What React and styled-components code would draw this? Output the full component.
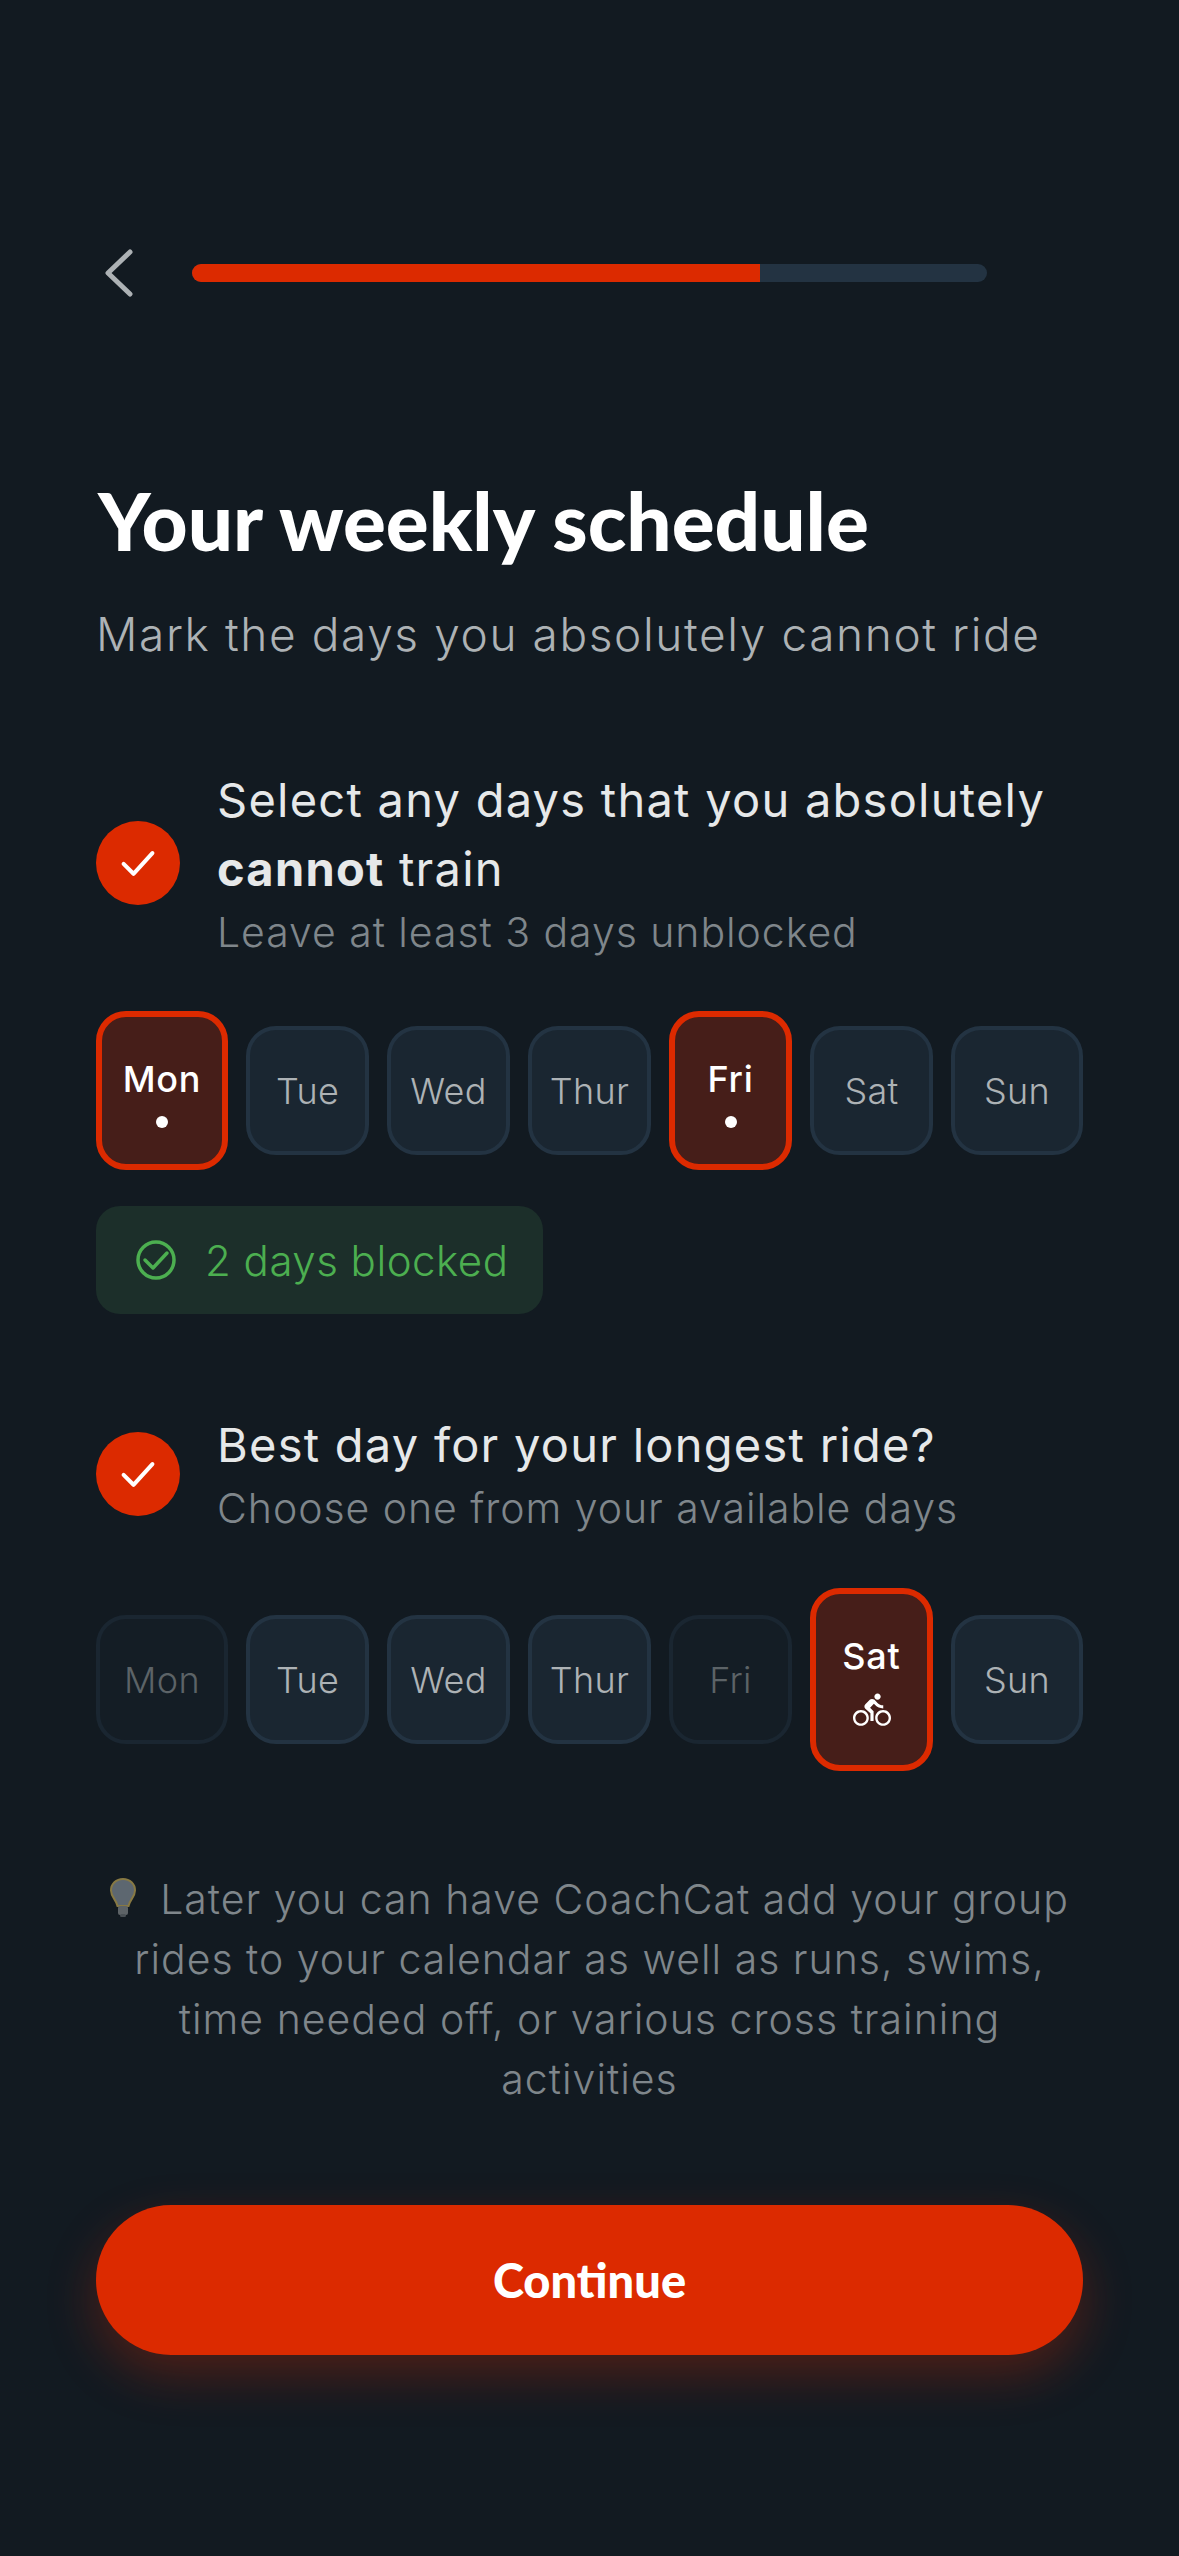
import React from "react";
import styled, { createGlobalStyle } from "styled-components";
import { MdDirectionsBike } from "react-icons/md";

const Global = createGlobalStyle`
  html, body { margin: 0; padding: 0; background: #121a21; }
  * { box-sizing: border-box; }
`;

const BODY = `"Inter", "Noto Sans", sans-serif`;
const HEAD = `"Lato", "Inter", sans-serif`;

const Page = styled.main`
  width: 1179px;
  height: 2556px;
  overflow: hidden;
  background: #121a21;
  padding: 250px 96px 0;
  font-family: ${BODY};
`;
const TopBar = styled.header`
  display: flex;
  align-items: center;
  height: 46px;
  padding-left: 9px;
  gap: 59px;
`;
const Back = styled.svg`
  width: 28px;
  height: 48px;
  flex: none;
  fill: none;
  stroke: #adb2b5;
  stroke-width: 5;
  stroke-linecap: round;
  stroke-linejoin: round;
`;
const Track = styled.div`
  width: 795px;
  height: 18px;
  border-radius: 9px;
  background: #233342;
  overflow: hidden;
`;
const Fill = styled.div`
  width: 568px;
  height: 100%;
  background: #dc2a00;
`;
const Title = styled.h1`
  margin: 179px 0 0 2px;
  font-family: ${HEAD};
  font-weight: 900;
  font-size: 80px;
  line-height: 90px;
  color: #fff;
`;
const Subtitle = styled.p`
  margin: 39px 0 0;
  font-size: 46px;
  line-height: 60px;
  font-weight: 300;
  letter-spacing: 1.6px;
  color: #adb2b5;
`;
const Step = styled.section`
  display: flex;
  align-items: center;
  gap: 37px;
  margin-top: ${(p) => p.$top}px;
`;
const Tick = styled.div`
  width: 84px;
  height: 84px;
  flex: none;
  border-radius: 50%;
  background: #dc2a00;
  display: flex;
  align-items: center;
  justify-content: center;
`;
const StepText = styled.div`
  display: flex;
  flex-direction: column;
`;
const StepTitle = styled.div`
  font-size: 47px;
  line-height: 69px;
  font-weight: 400;
  letter-spacing: 1.25px;
  color: #e6e8e9;
  strong { font-weight: 700; }
`;
const StepHint = styled.div`
  font-size: 41px;
  line-height: 58px;
  font-weight: 300;
  letter-spacing: 0.95px;
  color: #7f868b;
`;
const Days = styled.div`
  display: grid;
  grid-template-columns: 132px repeat(5, 123px) 132px;
  column-gap: 18px;
  align-items: center;
  height: ${(p) => p.$h}px;
  margin-top: ${(p) => p.$top}px;
`;
const Day = styled.div`
  display: flex;
  flex-direction: column;
  align-items: center;
  justify-content: center;
  border-radius: 30px;
  font-size: 36px;
  line-height: 44px;
  height: 129px;
  border: 4px solid #233342;
  background: #1a2631;
  color: #adb2b5;
  font-weight: 300;
  letter-spacing: 0.3px;
  ${(p) =>
    p.$state === "off" &&
    `background:#141d25;border-color:#1a2631;color:#5c6367;`}
  ${(p) =>
    p.$state === "on" &&
    `background:#461e19;border:6px solid #dc2a00;color:#fff;font-weight:500;letter-spacing:0.8px;padding-top:4px;height:${p.$tall}px;`}
`;
const Dot = styled.span`
  width: 12px;
  height: 12px;
  margin-top: 15px;
  border-radius: 50%;
  background: #fff;
`;
const BikeMark = styled(MdDirectionsBike)`
  margin-top: 13px;
  width: 38px;
  height: 38px;
  color: #fff;
`;
const Badge = styled.div`
  display: flex;
  align-items: center;
  gap: 29px;
  width: 447px;
  height: 108px;
  margin-top: 36px;
  padding-left: 40px;
  border-radius: 24px;
  background: #1c2f2a;
  color: #4caf50;
  font-size: 42px;
  font-weight: 300;
  letter-spacing: 0.5px;
`;
const Tip = styled.p`
  margin: 98px 0 0;
  padding: 0;
  text-align: center;
  font-size: 41px;
  line-height: 60px;
  font-weight: 300;
  letter-spacing: 1px;
  color: #7f868b;
`;
const Bulb = styled.svg`
  width: 26px;
  height: 40px;
  margin-right: 24px;
  vertical-align: -4px;
  opacity: 0.6;
`;
const Cta = styled.button`
  display: block;
  width: 987px;
  height: 150px;
  margin-top: 96px;
  border: none;
  border-radius: 75px;
  background: #dc2a00;
  color: #fff;
  font-family: ${HEAD};
  font-weight: 900;
  font-size: 47px;
  box-shadow: 0 20px 50px rgba(220, 42, 0, 0.3);
`;

const Check = () => (
  <svg width="36" height="36" viewBox="0 0 40 40" fill="none" stroke="#fff" strokeWidth="4.5" strokeLinecap="round" strokeLinejoin="round">
    <path d="M4 21 L15 32 L36 9" />
  </svg>
);

const first = [
  ["Mon", "on"], ["Tue"], ["Wed"], ["Thur"], ["Fri", "on"], ["Sat"], ["Sun"],
];
const second = [
  ["Mon", "off"], ["Tue"], ["Wed"], ["Thur"], ["Fri", "off"], ["Sat", "on"], ["Sun"],
];

export default function App() {
  return (
    <Page>
      <Global />
      <TopBar>
        <Back viewBox="0 0 28 48">
          <path d="M25 3 L3 24 L25 45" />
        </Back>
        <Track><Fill /></Track>
      </TopBar>
      <Title>Your weekly schedule</Title>
      <Subtitle>Mark the days you absolutely cannot ride</Subtitle>

      <Step $top={101}>
        <Tick><Check /></Tick>
        <StepText>
          <StepTitle>Select any days that you absolutely<br /><strong>cannot</strong> train</StepTitle>
          <StepHint>Leave at least 3 days unblocked</StepHint>
        </StepText>
      </Step>
      <Days $h={159} $top={50}>
        {first.map(([d, s]) => (
          <Day key={d} $state={s} $tall={159}>
            {d}
            {s === "on" && <Dot />}
          </Day>
        ))}
      </Days>
      <Badge>
        <svg width="40" height="40" viewBox="0 0 40 40" fill="none" stroke="#4caf50" strokeWidth="3.5" strokeLinecap="round" strokeLinejoin="round">
          <circle cx="20" cy="20" r="18" />
          <path d="M9 20 L17 28 L31 13" />
        </svg>
        2 days blocked
      </Badge>

      <Step $top={96}>
        <Tick><Check /></Tick>
        <StepText>
          <StepTitle>Best day for your longest ride?</StepTitle>
          <StepHint>Choose one from your available days</StepHint>
        </StepText>
      </Step>
      <Days $h={183} $top={51}>
        {second.map(([d, s]) => (
          <Day key={d} $state={s} $tall={183}>
            {d}
            {s === "on" && <BikeMark />}
          </Day>
        ))}
      </Days>
      <Tip>
        <Bulb viewBox="0 0 26 40">
          <path d="M13 1 C6 1 1 6 1 12.5 C1 19 6 21 7.5 28 H18.5 C20 21 25 19 25 12.5 C25 6 20 1 13 1 Z" fill="#8f9aa5" stroke="#d6b85a" strokeWidth="2" />
          <rect x="8" y="28" width="10" height="9" rx="2" fill="#8f9497" />
          <rect x="10" y="36" width="6" height="3" rx="1.5" fill="#6f7578" />
        </Bulb>
        Later you can have CoachCat add your group rides to your calendar as well as runs, swims, time needed off, or various cross training activities
      </Tip>
      <Cta>Continue</Cta>
    </Page>
  );
}
